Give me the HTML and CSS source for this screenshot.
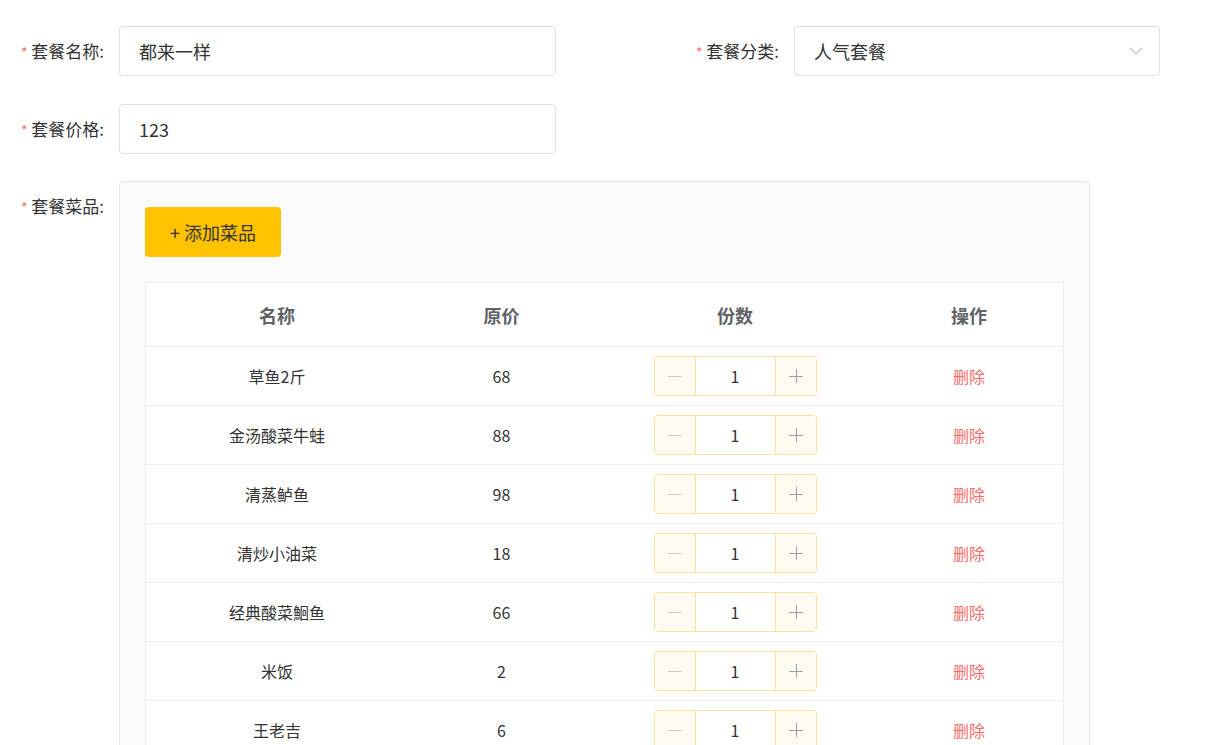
FILE: index.html
```html
<!DOCTYPE html>
<html>
<head>
  <meta charset="utf-8">
  <title>套餐编辑</title>
  <link rel="stylesheet" href="styles.css">
</head>
<body>
  <div class="form">
    <div class="row">
      <div class="item">
        <label class="label"><span class="star">*</span> 套餐名称:</label>
        <div class="input name-input">都来一样</div>
      </div>
      <div class="item item-right">
        <label class="label"><span class="star">*</span> 套餐分类:</label>
        <div class="input select">
          <span>人气套餐</span>
          <svg class="arrow" width="14" height="8" viewBox="0 0 14 8"><path d="M1 1l6 6 6-6" fill="none" stroke="#c0c4cc" stroke-width="1.2"/></svg>
        </div>
      </div>
    </div>

    <div class="row row-tight">
      <div class="item">
        <label class="label"><span class="star">*</span> 套餐价格:</label>
        <div class="input name-input">123</div>
      </div>
    </div>

    <div class="row">
      <div class="item">
        <label class="label"><span class="star">*</span> 套餐菜品:</label>
        <div class="dish-box">
          <button class="add-btn">+ 添加菜品</button>
          <table class="dish-table">
            <thead>
              <tr>
                <th class="col-name">名称</th>
                <th class="col-price">原价</th>
                <th class="col-count">份数</th>
                <th class="col-op">操作</th>
              </tr>
            </thead>
            <tbody id="dishes"></tbody>
          </table>
        </div>
      </div>
    </div>
  </div>

<script>
var dishes = [
  ['草鱼2斤', 68],
  ['金汤酸菜牛蛙', 88],
  ['清蒸鲈鱼', 98],
  ['清炒小油菜', 18],
  ['经典酸菜鮰鱼', 66],
  ['米饭', 2],
  ['王老吉', 6]
];

var minusIcon = '<svg width="14" height="14" viewBox="0 0 14 14"><path d="M0 7.5h14" stroke="#c8ccd2" stroke-width="1"/></svg>';
var plusIcon = '<svg width="14" height="14" viewBox="0 0 14 14"><path d="M0 7.5h14M7.5 0v14" stroke="#9a9ea6" stroke-width="1"/></svg>';

var html = '';
dishes.forEach(function (d) {
  html += '<tr>' +
    '<td>' + d[0] + '</td>' +
    '<td>' + d[1] + '</td>' +
    '<td><div class="counter">' +
      '<span class="cbtn minus">' + minusIcon + '</span>' +
      '<span class="cval">1</span>' +
      '<span class="cbtn plus">' + plusIcon + '</span>' +
    '</div></td>' +
    '<td><a class="del" href="#">删除</a></td>' +
    '</tr>';
});
document.getElementById('dishes').innerHTML = html;
</script>
</body>
</html>
```

FILE: styles.css
```css
body {
  margin: 0;
  background: #fff;
  font-family: "Noto Sans CJK SC", "Noto Sans", sans-serif;
  color: #333;
}

.form {
  padding-top: 26px;
}

.row {
  display: flex;
  margin-bottom: 28px;
}

.row-tight {
  margin-bottom: 27px;
}

.item {
  display: flex;
  align-items: flex-start;
}

.item-right {
  margin-left: 119px;
}

.label {
  width: 104px;
  height: 50px;
  padding-right: 15px;
  text-align: right;
  font-size: 17px;
  line-height: 50px;
  color: #333;
  flex-shrink: 0;
  overflow: hidden;
}

.star {
  color: #f56c6c;
  font-size: 14px;
}

.input {
  box-sizing: border-box;
  height: 50px;
  border: 1px solid #dcdfe6;
  border-radius: 4px;
  padding: 0 19px;
  font-size: 18px;
  line-height: 48px;
  color: #333;
  background: #fff;
}

.name-input {
  width: 437px;
}

.select {
  width: 366px;
  display: flex;
  justify-content: space-between;
  align-items: center;
  padding-right: 16px;
}

.dish-box {
  width: 971px;
  box-sizing: border-box;
  border: 1px solid #e4e7ed;
  border-radius: 4px;
  background: #fafafa;
  padding: 25px 26px 40px 25px;
}

.add-btn {
  display: block;
  width: 136px;
  height: 50px;
  border: none;
  border-radius: 4px;
  background: #ffc200;
  color: #333;
  font-family: inherit;
  font-size: 18px;
  cursor: pointer;
}

.dish-table {
  margin-top: 25px;
  width: 919px;
  table-layout: fixed;
  border-collapse: collapse;
  background: #fff;
  border: 1px solid #ebeef5;
  font-size: 16px;
}

.dish-table th {
  height: 63px;
  padding: 0;
  font-size: 18px;
  font-weight: bold;
  color: #606266;
  border-bottom: 1px solid #ebeef5;
}

.dish-table td {
  height: 58px;
  padding: 0;
  text-align: center;
  color: #333;
  border-bottom: 1px solid #ebeef5;
}

.col-name { width: 262px; }
.col-price { width: 187px; }
.col-count { width: 280px; }

.counter {
  display: inline-flex;
  width: 163px;
  height: 40px;
  box-sizing: border-box;
  border: 1px solid #fbe29a;
  border-radius: 4px;
  overflow: hidden;
  vertical-align: middle;
}

.cbtn {
  width: 40px;
  background: #fffbf0;
  display: flex;
  align-items: center;
  justify-content: center;
}

.minus {
  border-right: 1px solid #fbe29a;
}

.plus {
  border-left: 1px solid #fbe29a;
}

.cval {
  flex: 1;
  line-height: 38px;
  font-size: 16px;
  color: #333;
}

.del {
  color: #f56c6c;
  text-decoration: none;
  font-size: 16px;
}
```
